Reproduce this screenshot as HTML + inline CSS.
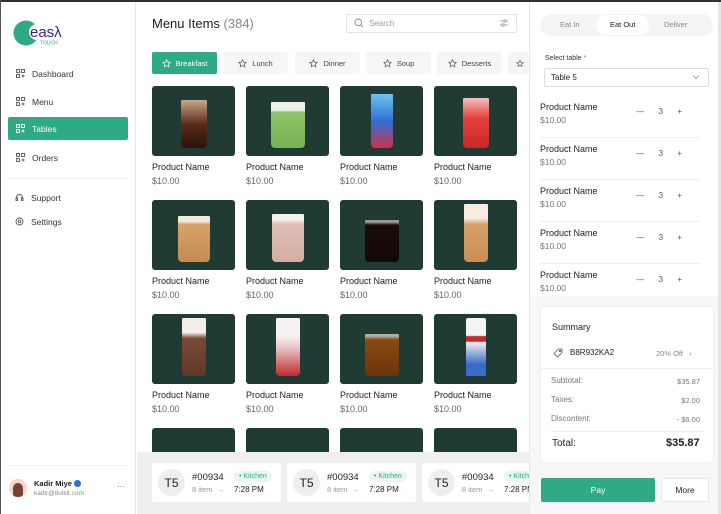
<!DOCTYPE html>
<html><head><meta charset="utf-8"><style>
*{box-sizing:border-box;margin:0;padding:0}
body{width:721px;height:514px;overflow:hidden;font-family:"Liberation Sans",sans-serif;background:#fff;position:relative;color:#1c1c1c}
.abs{position:absolute}
.top{left:0;top:0;width:721px;height:2px;background:#333}
.lb{left:0;top:0;width:1px;height:514px;background:#555}
.side{left:1px;top:2px;width:135px;height:512px;border-right:1px solid #e6e6e6;background:#fff}
.nav{position:absolute;left:8px;width:120px;height:23px;font-size:8.5px;color:#333;display:flex;align-items:center;padding-left:8px;border-radius:2px}
.nav svg{margin-right:7px}
.nav.act{background:#2eaa85;color:#fff}
.tile{position:absolute;width:83px;height:70px;background:#1f3b34;border-radius:3px;overflow:hidden}
.pn{position:absolute;font-size:9px;color:#222}
.pp{position:absolute;font-size:9px;color:#666}
.tab{position:absolute;top:52px;height:22px;background:#f6f6f6;font-size:7.5px;color:#444;display:flex;align-items:center;justify-content:center;border-radius:2px}
.tab svg{margin-right:5px}
.g{position:absolute;bottom:8px;left:50%;transform:translateX(-50%);border-radius:1px 1px 4px 4px}
.row{position:absolute;left:540px;width:172px;height:42px;border-bottom:1px solid #eee}
.row .n{position:absolute;left:0;top:6px;font-size:9px;color:#222}
.row .p{position:absolute;left:0;top:19px;font-size:8.5px;color:#777}
.row .q{position:absolute;right:12px;top:11px;font-size:8px;color:#555;letter-spacing:6px}
.card{position:absolute;top:463px;width:129px;height:39px;background:#fff;border-radius:3px}
.av{position:absolute;left:6px;top:6px;width:27px;height:27px;border-radius:50%;background:#eeeeee;font-size:12px;display:flex;align-items:center;justify-content:center;color:#222}
.card .o{position:absolute;left:40px;top:9px;font-size:9.5px;color:#222}
.card .k{position:absolute;left:82px;top:8px;font-size:7px;color:#2eaa85;background:#e8f7f1;border-radius:6px;padding:2px 5px}
.card .i{position:absolute;left:40px;top:22px;font-size:7.5px;color:#999}
.card .t{position:absolute;left:82px;top:22px;font-size:8px;color:#222}
.sl{position:absolute;left:551px;font-size:8px;color:#777}
.sr{position:absolute;right:21px;font-size:7.5px;color:#777}
</style></head><body>
<div class="abs side">
  <svg class="abs" style="left:11px;top:17px" width="60" height="30" viewBox="0 0 60 30">
    <circle cx="14" cy="14" r="12.5" fill="#2eaa85"/>
    <circle cx="25" cy="13" r="8" fill="#fff"/>
    <text x="18" y="18" font-size="15" fill="#3b1e8a" font-family="Liberation Sans">easλ</text>
    <text x="28" y="25.5" font-size="5" fill="#2eaa85" font-family="Liberation Sans">TOUCH</text>
  </svg>
</div>
<div class="nav" style="top:62px"><svg width="9" height="9" viewBox="0 0 9 9" fill="none" stroke="#555" stroke-width=".9"><rect x=".5" y=".5" width="3" height="3"/><rect x="5.5" y=".5" width="3" height="3"/><rect x=".5" y="5.5" width="3" height="3"/><path d="M5.5 7h3M7 5.5v3"/></svg>Dashboard</div>
<div class="nav" style="top:90px"><svg width="9" height="9" viewBox="0 0 9 9" fill="none" stroke="#555" stroke-width=".9"><rect x=".5" y=".5" width="3" height="3"/><rect x="5.5" y=".5" width="3" height="3"/><rect x=".5" y="5.5" width="3" height="3"/><path d="M5.5 7h3M7 5.5v3"/></svg>Menu</div>
<div class="nav act" style="top:117px"><svg width="9" height="9" viewBox="0 0 9 9" fill="none" stroke="#fff" stroke-width=".9"><rect x=".5" y=".5" width="3" height="3"/><rect x="5.5" y=".5" width="3" height="3"/><rect x=".5" y="5.5" width="3" height="3"/><path d="M5.5 7h3M7 5.5v3"/></svg>Tables</div>
<div class="nav" style="top:146px"><svg width="9" height="9" viewBox="0 0 9 9" fill="none" stroke="#555" stroke-width=".9"><rect x=".5" y=".5" width="3" height="3"/><rect x="5.5" y=".5" width="3" height="3"/><rect x=".5" y="5.5" width="3" height="3"/><path d="M5.5 7h3M7 5.5v3"/></svg>Orders</div>
<div class="abs" style="left:8px;top:178px;width:120px;height:1px;background:#eee"></div>
<div class="nav" style="top:186px;padding-left:7px"><svg width="9" height="9" viewBox="0 0 9 9" fill="none" stroke="#555" stroke-width=".9"><path d="M1.5 6V4.5a3 3 0 0 1 6 0V6"/><rect x="1" y="5" width="1.5" height="2.5"/><rect x="6.5" y="5" width="1.5" height="2.5"/></svg>Support</div>
<div class="nav" style="top:210px;padding-left:7px"><svg width="9" height="9" viewBox="0 0 9 9" fill="none" stroke="#555" stroke-width=".9"><circle cx="4.5" cy="4.5" r="3.5"/><circle cx="4.5" cy="4.5" r="1.3"/></svg>Settings</div>
<div class="abs" style="left:8px;top:465px;width:120px;height:1px;background:#f0f0f0"></div>
<div class="abs" style="left:9px;top:479px;width:18px;height:18px;border-radius:50%;background:#f3d9cf;overflow:hidden"><div style="margin:4px auto 0;width:10px;height:14px;background:#7a4030;border-radius:5px 5px 3px 3px"></div></div>
<div class="abs" style="left:34px;top:479px;font-size:7.5px;font-weight:bold;color:#222">Kadir Miye <span style="display:inline-block;width:7px;height:7px;border-radius:50%;background:#2f6fe0;vertical-align:-1px"></span></div>
<div class="abs" style="left:34px;top:490px;font-size:6.5px;color:#888">kadir@8uikit.com</div>
<div class="abs" style="left:117px;top:482px;font-size:8px;color:#666">···</div>

<!-- main -->
<div class="abs" style="left:152px;top:16px;font-size:13px;color:#1c1c1c">Menu Items <span style="color:#888">(384)</span></div>
<div class="abs" style="left:346px;top:14px;width:171px;height:19px;border:1px solid #e4e4e4;border-radius:2px"></div>
<svg class="abs" style="left:354px;top:18px" width="10" height="10" viewBox="0 0 10 10" fill="none" stroke="#888" stroke-width=".9"><circle cx="4.3" cy="4.3" r="3.3"/><path d="M6.8 6.8L9 9"/></svg>
<div class="abs" style="left:369px;top:19px;font-size:8px;color:#999">Search</div>
<svg class="abs" style="left:499px;top:18px" width="10" height="10" viewBox="0 0 10 10" fill="none" stroke="#999" stroke-width=".8"><path d="M1 3h8M1 7h8"/><circle cx="6" cy="3" r="1.2" fill="#fff"/><circle cx="4" cy="7" r="1.2" fill="#fff"/></svg>

<div class="tab" style="left:152px;width:65px;background:#2eaa85;color:#fff"><svg width="9" height="9" viewBox="0 0 10 10" fill="none" stroke="#fff" stroke-width=".8"><path d="M5 .8l1.2 2.7 2.9.3-2.2 2 .7 2.9L5 7.2 2.4 8.7l.7-2.9-2.2-2 2.9-.3z"/></svg>Breakfast</div>
<div class="tab" style="left:223px;width:65px"><svg width="9" height="9" viewBox="0 0 10 10" fill="none" stroke="#555" stroke-width=".8"><path d="M5 .8l1.2 2.7 2.9.3-2.2 2 .7 2.9L5 7.2 2.4 8.7l.7-2.9-2.2-2 2.9-.3z"/></svg>Lunch</div>
<div class="tab" style="left:295px;width:65px"><svg width="9" height="9" viewBox="0 0 10 10" fill="none" stroke="#555" stroke-width=".8"><path d="M5 .8l1.2 2.7 2.9.3-2.2 2 .7 2.9L5 7.2 2.4 8.7l.7-2.9-2.2-2 2.9-.3z"/></svg>Dinner</div>
<div class="tab" style="left:366px;width:65px"><svg width="9" height="9" viewBox="0 0 10 10" fill="none" stroke="#555" stroke-width=".8"><path d="M5 .8l1.2 2.7 2.9.3-2.2 2 .7 2.9L5 7.2 2.4 8.7l.7-2.9-2.2-2 2.9-.3z"/></svg>Soup</div>
<div class="tab" style="left:437px;width:65px"><svg width="9" height="9" viewBox="0 0 10 10" fill="none" stroke="#555" stroke-width=".8"><path d="M5 .8l1.2 2.7 2.9.3-2.2 2 .7 2.9L5 7.2 2.4 8.7l.7-2.9-2.2-2 2.9-.3z"/></svg>Desserts</div>
<div class="tab" style="left:508px;width:21px;justify-content:flex-start;padding-left:8px"><svg width="9" height="9" viewBox="0 0 10 10" fill="none" stroke="#555" stroke-width=".8"><path d="M5 .8l1.2 2.7 2.9.3-2.2 2 .7 2.9L5 7.2 2.4 8.7l.7-2.9-2.2-2 2.9-.3z"/></svg></div>

<!-- row 1 -->
<div class="tile" style="left:152px;top:86px"><div class="g" style="width:26px;height:48px;background:linear-gradient(#c9a888,#5a2c18 50%,#2a130b)"></div></div>
<div class="tile" style="left:246px;top:86px"><div class="g" style="width:34px;height:46px;background:linear-gradient(#eef0e4 18%,#8fc46a 22%,#76b152)"></div></div>
<div class="tile" style="left:340px;top:86px"><div class="g" style="width:22px;height:54px;background:linear-gradient(#6cc4f0,#2f6fd4 50%,#d0304a)"></div></div>
<div class="tile" style="left:434px;top:86px"><div class="g" style="width:26px;height:50px;background:linear-gradient(#f4c0c0,#e5413c 40%,#c82a26)"></div></div>
<!-- row 2 -->
<div class="tile" style="left:152px;top:200px"><div class="g" style="width:32px;height:46px;background:linear-gradient(#f2e8d8 12%,#d7a36a 18%,#c48a52)"></div></div>
<div class="tile" style="left:246px;top:200px"><div class="g" style="width:32px;height:48px;background:linear-gradient(#f4f0ec 12%,#dfc0b6 20%,#d3aea3)"></div></div>
<div class="tile" style="left:340px;top:200px"><div class="g" style="width:34px;height:42px;background:linear-gradient(#9a9a9a 5%,#1a0d08 12%,#120806)"></div></div>
<div class="tile" style="left:434px;top:200px"><div class="g" style="width:24px;height:58px;background:linear-gradient(#f6ece0 25%,#d6a06a 35%,#c88d55)"></div></div>
<!-- row 3 -->
<div class="tile" style="left:152px;top:314px"><div class="g" style="width:24px;height:58px;background:linear-gradient(#f2eee8 25%,#7a4a36 35%,#5f3828)"></div></div>
<div class="tile" style="left:246px;top:314px"><div class="g" style="width:24px;height:58px;background:linear-gradient(#f6f2f0 30%,#e6c8c8 50%,#c02a30)"></div></div>
<div class="tile" style="left:340px;top:314px"><div class="g" style="width:34px;height:42px;background:linear-gradient(#b0b0a0 5%,#8a4a12 14%,#6a350c)"></div></div>
<div class="tile" style="left:434px;top:314px"><div class="g" style="width:20px;height:58px;border-radius:2px;background:linear-gradient(#f4f4f4,#f4f4f4 30%,#c82a2a 32%,#c82a2a 40%,#f0f0f0 42%,#3a6bc8 80%)"></div></div>
<!-- row 4 -->
<div class="tile" style="left:152px;top:428px"><div class="g" style="width:24px;height:40px;bottom:-10px;background:#eaf0f8"></div></div>
<div class="tile" style="left:246px;top:428px"><div class="g" style="width:12px;height:44px;bottom:-10px;background:#4f6a30"></div></div>
<div class="tile" style="left:340px;top:428px"><div class="g" style="width:34px;height:40px;bottom:-10px;background:linear-gradient(#efe6d8 20%,#c9a27a 30%)"></div></div>
<div class="tile" style="left:434px;top:428px"><div class="g" style="width:22px;height:40px;bottom:-10px;background:#7fb640"></div></div>

<div class="pn" style="left:152px;top:162px">Product Name</div><div class="pp" style="left:152px;top:176px">$10.00</div>
<div class="pn" style="left:246px;top:162px">Product Name</div><div class="pp" style="left:246px;top:176px">$10.00</div>
<div class="pn" style="left:340px;top:162px">Product Name</div><div class="pp" style="left:340px;top:176px">$10.00</div>
<div class="pn" style="left:434px;top:162px">Product Name</div><div class="pp" style="left:434px;top:176px">$10.00</div>
<div class="pn" style="left:152px;top:276px">Product Name</div><div class="pp" style="left:152px;top:290px">$10.00</div>
<div class="pn" style="left:246px;top:276px">Product Name</div><div class="pp" style="left:246px;top:290px">$10.00</div>
<div class="pn" style="left:340px;top:276px">Product Name</div><div class="pp" style="left:340px;top:290px">$10.00</div>
<div class="pn" style="left:434px;top:276px">Product Name</div><div class="pp" style="left:434px;top:290px">$10.00</div>
<div class="pn" style="left:152px;top:390px">Product Name</div><div class="pp" style="left:152px;top:404px">$10.00</div>
<div class="pn" style="left:246px;top:390px">Product Name</div><div class="pp" style="left:246px;top:404px">$10.00</div>
<div class="pn" style="left:340px;top:390px">Product Name</div><div class="pp" style="left:340px;top:404px">$10.00</div>
<div class="pn" style="left:434px;top:390px">Product Name</div><div class="pp" style="left:434px;top:404px">$10.00</div>

<!-- order bar -->
<div class="abs" style="left:137px;top:452px;width:393px;height:62px;background:#efeff0;overflow:hidden">
  <div class="card" style="left:15px;top:11px"><div class="av">T5</div><div class="o">#00934</div><div class="k">• Kitchen</div><div class="i">8 item &nbsp;→</div><div class="t">7:28 PM</div></div>
  <div class="card" style="left:150px;top:11px"><div class="av">T5</div><div class="o">#00934</div><div class="k">• Kitchen</div><div class="i">8 item &nbsp;→</div><div class="t">7:28 PM</div></div>
  <div class="card" style="left:285px;top:11px"><div class="av">T5</div><div class="o">#00934</div><div class="k">• Kitchen</div><div class="i">8 item &nbsp;→</div><div class="t">7:28 PM</div></div>
</div>

<!-- right panel -->
<div class="abs" style="left:529px;top:2px;width:1px;height:512px;background:#e8e8e8"></div>
<div class="abs" style="left:718px;top:2px;width:3px;height:512px;background:#e6e6e6"></div>
<div class="abs" style="left:540px;top:14px;width:173px;height:22px;background:#f4f4f4;border-radius:11px"></div>
<div class="abs" style="left:596px;top:15px;width:53px;height:20px;background:#fff;border-radius:10px"></div>
<div class="abs" style="left:560px;top:20px;font-size:7.5px;color:#888">Eat In</div>
<div class="abs" style="left:610px;top:20px;font-size:7.5px;color:#222">Eat Out</div>
<div class="abs" style="left:664px;top:20px;font-size:7.5px;color:#888">Deliver</div>
<div class="abs" style="left:545px;top:55px;font-size:7px;color:#333">Select table <span style="color:#e55">*</span></div>
<div class="abs" style="left:544px;top:68px;width:165px;height:19px;border:1px solid #ddd;border-radius:2px"></div>
<div class="abs" style="left:551px;top:73px;font-size:8px;color:#222">Table 5</div>
<svg class="abs" style="left:692px;top:74px" width="8" height="6" viewBox="0 0 8 6" fill="none" stroke="#999" stroke-width=".8"><path d="M1 1.5l3 3 3-3"/></svg>
<div class="row" style="top:96px;width:160px"><div class="n">Product Name</div><div class="p">$10.00</div><div class="q">— 3 +</div></div>
<div class="row" style="top:138px;width:160px"><div class="n">Product Name</div><div class="p">$10.00</div><div class="q">— 3 +</div></div>
<div class="row" style="top:180px;width:160px"><div class="n">Product Name</div><div class="p">$10.00</div><div class="q">— 3 +</div></div>
<div class="row" style="top:222px;width:160px"><div class="n">Product Name</div><div class="p">$10.00</div><div class="q">— 3 +</div></div>
<div class="row" style="top:264px;width:160px;border:none"><div class="n">Product Name</div><div class="p">$10.00</div><div class="q">— 3 +</div></div>
<div class="abs" style="left:530px;top:296px;width:188px;height:218px;background:#f7f7f7"></div>
<div class="abs" style="left:541px;top:307px;width:172px;height:155px;background:#fff;border-radius:3px;box-shadow:0 0 4px rgba(0,0,0,.05)"></div>
<div class="abs" style="left:552px;top:322px;font-size:9px;color:#222">Summary</div>
<svg class="abs" style="left:553px;top:348px" width="10" height="10" viewBox="0 0 10 10" fill="none" stroke="#555" stroke-width=".8"><path d="M1 5.5L5.5 1H9v3.5L4.5 9z"/><circle cx="7" cy="3" r=".7"/></svg>
<div class="abs" style="left:570px;top:348px;font-size:8px;color:#222">B8R932KA2</div>
<div class="abs" style="left:656px;top:349px;font-size:7.5px;color:#888">20% Off &nbsp; ›</div>
<div class="abs" style="left:541px;top:368px;width:172px;height:1px;background:#eee"></div>
<div class="sl" style="top:376px">Subtotal:</div><div class="sr" style="top:377px">$35.87</div>
<div class="sl" style="top:395px">Taxes:</div><div class="sr" style="top:396px">$2.00</div>
<div class="sl" style="top:414px">Discontent:</div><div class="sr" style="top:415px">- $6.00</div>
<div class="abs" style="left:551px;top:431px;width:152px;height:1px;background:#f0f0f0"></div>
<div class="abs" style="left:552px;top:438px;font-size:10px;color:#222">Total:</div>
<div class="abs" style="left:666px;top:437px;font-size:11px;font-weight:bold;color:#222">$35.87</div>
<div class="abs" style="left:541px;top:478px;width:114px;height:24px;background:#2eaa85;border-radius:2px;color:#fff;font-size:8.5px;display:flex;align-items:center;justify-content:center">Pay</div>
<div class="abs" style="left:661px;top:478px;width:48px;height:24px;background:#fff;border:1px solid #e6e6e6;border-radius:2px;color:#222;font-size:8.5px;display:flex;align-items:center;justify-content:center">More</div>
<div class="abs top"></div><div class="abs lb"></div>
</body></html>
